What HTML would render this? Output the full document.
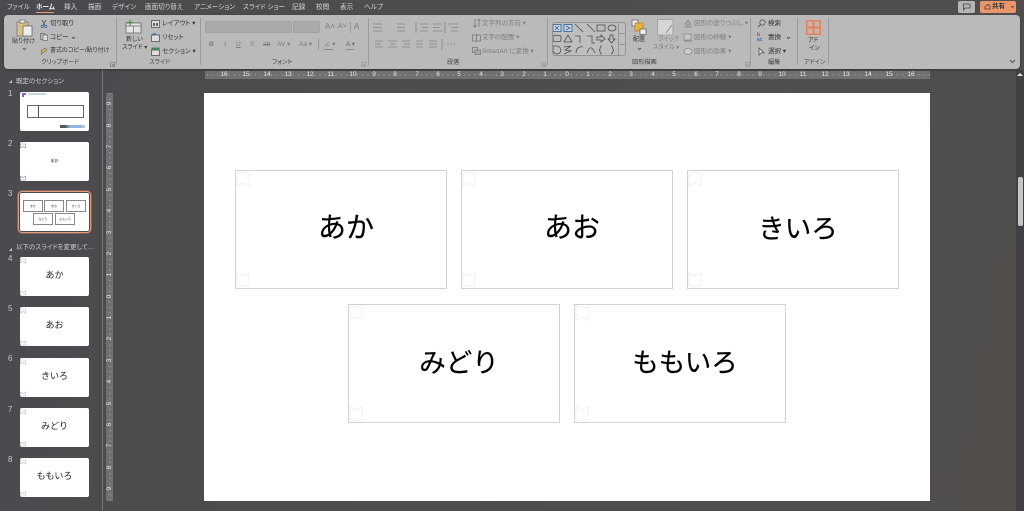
<!DOCTYPE html>
<html lang="ja"><head><meta charset="utf-8"><title>PowerPoint</title>
<style>
html,body{margin:0;padding:0;width:1024px;height:511px;overflow:hidden;background:#4d4b4e;font-family:"Liberation Sans","Noto Sans CJK JP",sans-serif;font-feature-settings:"palt"}
.a{position:absolute;white-space:nowrap}
#app{position:relative;width:1024px;height:511px;overflow:hidden;background:linear-gradient(100deg,#4b4a4e,#504e4e 80%,#514e4c);filter:blur(.25px)}
.m{top:3px;font-size:6.6px;line-height:9px;color:#d6d6d6}
.t{font-size:6.5px;line-height:9px;color:#333}
.d{font-size:6.5px;line-height:9px;color:#7e7e7e}
.l{font-size:6.2px;line-height:9px;color:#444;top:58px}
.sep{position:absolute;top:18px;height:47px;width:1px;background:#9b9b9b}
.card{position:absolute;width:210px;height:117px;border:1px solid #d2d2d2;background:#fff;font-family:"Noto Sans CJK JP",sans-serif;font-size:26.5px;line-height:111px;text-align:center;text-indent:10px;color:#000;-webkit-text-stroke:.2px #000;font-feature-settings:normal}
.card svg{position:absolute;left:0;width:14px;height:16px}
.th{position:absolute;left:20px;width:69px;height:39px;background:#fff;border-radius:2px;text-align:center;font-size:9px;line-height:35px;color:#222;font-family:"Noto Sans CJK JP",sans-serif;font-feature-settings:normal}
.th svg{position:absolute;left:0;width:6px;height:6px}
.n{position:absolute;left:8px;font-size:8px;line-height:10px;color:#c9c9c9}
.mini{position:absolute;height:10px;border:1px solid #888;background:#fff;font-size:3px;line-height:10px;text-align:center;color:#444;text-indent:0}
.rh{position:absolute;top:71px;font-size:6.5px;line-height:8px;color:#ececec;transform:translateX(-50%);background:#707070}
.rv{position:absolute;left:106px;width:7px;text-align:center;font-size:6.5px;line-height:7px;color:#ececec;transform:rotate(-90deg);background:#707070}
.g{position:absolute;height:10px;background:#aaa;border:1px solid #a2a2a2;border-radius:2px}
</style></head><body><div id="app">

<div class="a m" style="left:7px">ファイル</div>
<div class="a m" style="left:36px;color:#f1f1f1;font-weight:bold">ホーム</div>
<div class="a" style="left:36px;top:12px;width:18px;height:1px;background:#e59a7a"></div>
<div class="a m" style="left:64px">挿入</div>
<div class="a m" style="left:88px">描画</div>
<div class="a m" style="left:112px">デザイン</div>
<div class="a m" style="left:145px">画面切り替え</div>
<div class="a m" style="left:194px">アニメーション</div>
<div class="a m" style="left:243px">スライド ショー</div>
<div class="a m" style="left:292px">記録</div>
<div class="a m" style="left:316px">校閲</div>
<div class="a m" style="left:340px">表示</div>
<div class="a m" style="left:364px">ヘルプ</div>

<div class="a" style="left:958px;top:1px;width:17px;height:12px;background:#b5b5b5;border-radius:2px"></div>
<svg class="a" style="left:962px;top:3px" width="9" height="8" viewBox="0 0 9 8"><path d="M1 1H8V5H3L1.500 7V1" fill="none" stroke="#444" stroke-width=".8"/></svg>
<div class="a" style="left:980px;top:1px;width:36px;height:12px;background:#e8966a;border-radius:2px;font-size:6.5px;line-height:12px;color:#333;text-indent:12px;font-weight:bold">共有</div>
<svg class="a" style="left:984px;top:3px" width="7" height="7" viewBox="0 0 7 7"><path d="M1 3V6H6V3M2 3L4 1.500L6 2.500" fill="none" stroke="#444" stroke-width=".8"/></svg>
<svg class="a" style="left:1010px;top:5px" width="5" height="4" viewBox="0 0 5 4"><path d="M1 1L2.500 2.500L4 1" fill="none" stroke="#444" stroke-width=".8"/></svg>

<div class="a" style="left:4px;top:15px;width:1016px;height:54px;background:#bababa;border-radius:4px;box-shadow:0 1px 2px #333"></div>
<div class="sep" style="left:116px"></div><div class="sep" style="left:200px"></div><div class="sep" style="left:368px"></div><div class="sep" style="left:547px"></div><div class="sep" style="left:750px"></div><div class="sep" style="left:797px"></div><div class="sep" style="left:828px"></div>

<!-- clipboard -->
<svg class="a" style="left:16px;top:19px" width="17" height="18" viewBox="0 0 17 18"><rect x="1" y="3" width="11" height="14" fill="#d9c089" stroke="#777" stroke-width=".8"/><rect x="4" y="1" width="5" height="3" fill="#eee" stroke="#666" stroke-width=".7"/><rect x="7" y="7" width="9" height="10" fill="#eee" stroke="#666" stroke-width=".8"/></svg>
<div class="a t" style="left:12px;top:38px;font-size:6px">貼り付け</div>
<svg class="a" style="left:22px;top:47px" width="5" height="4" viewBox="0 0 5 4"><path d="M1 1L2.500 2.500L4 1" fill="none" stroke="#444" stroke-width=".8"/></svg>
<svg class="a" style="left:40px;top:19px" width="8" height="9" viewBox="0 0 8 9"><path d="M2 1L5 6M6 1L3 6" stroke="#555" fill="none" stroke-width=".8"/><circle cx="2.300" cy="7.300" r="1.200" fill="none" stroke="#3a6ea5" stroke-width=".8"/><circle cx="5.700" cy="7.300" r="1.200" fill="none" stroke="#3a6ea5" stroke-width=".8"/></svg>
<div class="a t" style="left:50px;top:19px">切り取り</div>
<svg class="a" style="left:40px;top:33px" width="8" height="8" viewBox="0 0 8 8"><rect x=".5" y=".5" width="4.500" height="6" fill="none" stroke="#666" stroke-width=".7"/><rect x="3" y="2" width="4.500" height="5.500" fill="#ddd" stroke="#666" stroke-width=".7"/></svg>
<div class="a t" style="left:50px;top:33px">コピー</div>
<svg class="a" style="left:71px;top:36px" width="5" height="4" viewBox="0 0 5 4"><path d="M1 1L2.500 2.500L4 1" fill="none" stroke="#444" stroke-width=".8"/></svg>
<svg class="a" style="left:40px;top:47px" width="8" height="8" viewBox="0 0 8 8"><path d="M1 4L5 1L7 3L3 6Z" fill="#d8b560" stroke="#666" stroke-width=".6"/><path d="M2 6L1 7.500" stroke="#555" stroke-width=".8"/></svg>
<div class="a t" style="left:50px;top:47px;font-size:6px">書式のコピー/貼り付け</div>
<div class="a l" style="left:41px">クリップボード</div>
<svg class="a" style="left:110px;top:62px" width="5" height="5" viewBox="0 0 5 5"><path d="M.5 .5H4.500V4.500H.5ZM2 2L4 4" fill="none" stroke="#666" stroke-width=".6"/></svg>

<!-- slides -->
<svg class="a" style="left:125px;top:19px" width="17" height="15" viewBox="0 0 17 15"><rect x="1" y="4" width="15" height="10" fill="#e4e4e4" stroke="#666" stroke-width=".8"/><path d="M1 7H16M8.500 7V14" stroke="#666" stroke-width=".7"/><path d="M5 .5V7M2 3.500H8" stroke="#3d8a3d" stroke-width="1"/></svg>
<div class="a t" style="left:126px;top:36px;font-size:6px">新しい</div>
<div class="a t" style="left:122px;top:44px;font-size:6px">スライド ▾</div>
<svg class="a" style="left:151px;top:20px" width="9" height="8" viewBox="0 0 9 8"><rect x=".5" y=".5" width="8" height="7" fill="#ddd" stroke="#555" stroke-width=".8"/><rect x="2" y="3" width="2" height="3" fill="#666"/><rect x="5" y="3" width="2" height="3" fill="#666"/></svg>
<div class="a t" style="left:162px;top:19px">レイアウト ▾</div>
<svg class="a" style="left:151px;top:33px" width="9" height="9" viewBox="0 0 9 9"><rect x=".5" y="2" width="8" height="6.500" fill="#ddd" stroke="#555" stroke-width=".8"/><path d="M1 2.500A3 3 0 0 1 5 1" fill="none" stroke="#2f6fb5" stroke-width="1.200"/></svg>
<div class="a t" style="left:162px;top:33px">リセット</div>
<svg class="a" style="left:151px;top:47px" width="9" height="9" viewBox="0 0 9 9"><rect x=".5" y=".5" width="8" height="2" fill="#3d8a5d"/><rect x=".5" y="3" width="8" height="5.500" fill="#ddd" stroke="#555" stroke-width=".8"/></svg>
<div class="a t" style="left:162px;top:47px">セクション ▾</div>
<div class="a l" style="left:149px">スライド</div>

<!-- font -->
<div class="g" style="left:205px;top:21px;width:85px"></div>
<div class="g" style="left:293px;top:21px;width:25px"></div>
<div class="a d" style="left:325px;top:22px;font-size:8px">A˄</div>
<div class="a d" style="left:338px;top:22px;font-size:7px">A˅</div>
<div class="a" style="left:350px;top:22px;width:1px;height:11px;background:#999"></div>
<div class="a d" style="left:354px;top:22px;font-size:8px">A</div>
<div class="a d" style="left:209px;top:40px;font-weight:bold">B</div>
<div class="a d" style="left:224px;top:40px;font-style:italic;font-family:'Liberation Serif'">I</div>
<div class="a d" style="left:236px;top:40px;text-decoration:underline">U</div>
<div class="a d" style="left:250px;top:40px">S</div>
<div class="a d" style="left:263px;top:40px;text-decoration:line-through">ab</div>
<div class="a d" style="left:277px;top:40px">AV ▾</div>
<div class="a d" style="left:299px;top:40px">Aa ▾</div>
<div class="a" style="left:318px;top:38px;width:1px;height:12px;background:#999"></div>
<div class="a d" style="left:324px;top:40px">∠ ▾</div>
<div class="a" style="left:324px;top:49px;width:9px;height:1px;background:#888"></div>
<div class="a d" style="left:346px;top:40px;color:#6a6a6a">A ▾</div>
<div class="a" style="left:346px;top:49px;width:8px;height:1px;background:#888"></div>
<div class="a l" style="left:272px">フォント</div>
<svg class="a" style="left:361px;top:62px" width="5" height="5" viewBox="0 0 5 5"><path d="M.5 .5H4.500V4.500H.5ZM2 2L4 4" fill="none" stroke="#888" stroke-width=".6"/></svg>

<!-- paragraph -->
<svg class="a" style="left:373px;top:22px" width="95" height="30" viewBox="0 0 95 30" fill="none" stroke="#858585" stroke-width=".8">
<path d="M0 2H9M0 5.500H9M0 9H9M24 2H32M24 5.500H32M24 9H32M47 2H55M49 5.500H55M47 9H55M60 2H69M60 5.500H67M60 9H69M75 2H85M78 5.500H85M78 9H85"/>
<path d="M2 19H10M2 22H8M2 25H10M15 19H24M17 22H22M15 25H24M29 19H37M31 22H37M29 25H37M43 19H50M43 22H50M43 25H50M56 19H64M56 22H64M56 25H64"/>
<path d="M43 0V11M72 0V11M69 17V28"/><path d="M74 22H82" stroke-dasharray="2 1"/></svg>
<svg class="a" style="left:473px;top:19px" width="9" height="9" viewBox="0 0 9 9"><path d="M2 0V8M0.500 6.500L2 8L3.500 6.500M6 8V0M4.500 1.500L6 0L7.500 1.500" fill="none" stroke="#777" stroke-width=".8"/></svg>
<div class="a d" style="left:482px;top:19px">文字列の方向 ▾</div>
<svg class="a" style="left:472px;top:34px" width="9" height="8" viewBox="0 0 9 8"><path d="M.5 1H8.500V7H.5ZM4.500 0V8" fill="none" stroke="#777" stroke-width=".8"/></svg>
<div class="a d" style="left:482px;top:33px">文字の配置 ▾</div>
<svg class="a" style="left:472px;top:47px" width="9" height="8" viewBox="0 0 9 8"><rect x=".5" y=".5" width="5" height="5" fill="none" stroke="#777" stroke-width=".8"/><rect x="3" y="3" width="5.500" height="4.500" fill="#aaa" stroke="#777" stroke-width=".7"/></svg>
<div class="a d" style="left:482px;top:47px">SmartArt に変換 ▾</div>
<div class="a l" style="left:447px">段落</div>
<svg class="a" style="left:541px;top:62px" width="5" height="5" viewBox="0 0 5 5"><path d="M.5 .5H4.500V4.500H.5ZM2 2L4 4" fill="none" stroke="#888" stroke-width=".6"/></svg>

<!-- drawing -->
<div class="a" style="left:552px;top:22px;width:72px;height:32px;border:1px solid #949494;border-radius:3px;background:#bebebe"></div>
<svg class="a" style="left:553px;top:23px" width="65" height="33" viewBox="0 0 65 33" fill="none" stroke="#4e4e4e" stroke-width=".8">
<rect x="0" y="1.500" width="8" height="7" fill="#c9d6e6" stroke="#2d5f95"/><path d="M2 3L6 7M6 3L2 7" stroke="#2d5f95"/><rect x="11" y="1.500" width="8" height="7" fill="#c9d6e6" stroke="#2d5f95"/><path d="M13 3L17 5L13 7" stroke="#2d5f95"/>
<path d="M22 1L30 9M34 1L42 9"/><rect x="44" y="2" width="8" height="6"/><ellipse cx="59" cy="5" rx="4" ry="3"/>
<rect x="0" y="12.500" width="8" height="6" rx="1.500"/><path d="M11 19L15 12L19 19Z"/><path d="M22 13H27V20M34 13H39V20H42"/><path d="M44 14H48V12L52 16L48 19V17H44Z"/><path d="M57 12H60V16H62L58.500 20L55 16H57Z"/>
<path d="M0 23H4A4 4 0 1 1 0 28Z"/><path d="M11 24L18 23L12 27L18 28L11 31"/><path d="M23 30C23 25 27 23 30 24M34 30C37 22 39 24 42 30"/><path d="M49 23C46 23 48 27 46 27C48 27 46 31 49 31M58 23C61 23 59 27 61 27C59 27 61 31 58 31"/></svg>
<div class="a" style="left:618px;top:22px;width:1px;height:33px;background:#949494"></div>
<div class="a" style="left:618px;top:33px;width:7px;height:1px;background:#949494"></div>
<div class="a" style="left:618px;top:44px;width:7px;height:1px;background:#949494"></div>
<svg class="a" style="left:631px;top:19px" width="16" height="16" viewBox="0 0 16 16"><rect x="1" y="1" width="6" height="6" fill="#eee" stroke="#666" stroke-width=".8"/><rect x="4" y="4" width="8" height="8" fill="#e8b33c" stroke="#a87e1d" stroke-width=".6"/><rect x="9" y="10" width="6" height="5.500" fill="#eee" stroke="#666" stroke-width=".8"/></svg>
<div class="a t" style="left:633px;top:36px;font-size:6px">配置</div>
<svg class="a" style="left:637px;top:47px" width="5" height="4" viewBox="0 0 5 4"><path d="M1 1L2.500 2.500L4 1" fill="none" stroke="#444" stroke-width=".8"/></svg>
<svg class="a" style="left:657px;top:19px" width="17" height="17" viewBox="0 0 17 17"><rect x=".5" y=".5" width="15.500" height="15.500" rx="1" fill="#d6d6d6" stroke="#a3a3a3"/><path d="M9 14L15 6" stroke="#8e8e8e"/></svg>
<div class="a d" style="left:658px;top:36px;font-size:6px">クイック</div>
<div class="a d" style="left:653px;top:44px;font-size:6px">スタイル ▾</div>
<div class="a l" style="left:632px">図形描画</div>
<svg class="a" style="left:683px;top:19px" width="10" height="9" viewBox="0 0 10 9"><path d="M2 5L5 1L8 5L5 7Z" fill="#aaa" stroke="#888" stroke-width=".7"/><path d="M1 8H9" stroke="#888"/></svg>
<div class="a d" style="left:694px;top:19px">図形の塗りつぶし ▾</div>
<svg class="a" style="left:683px;top:33px" width="10" height="9" viewBox="0 0 10 9"><rect x="1" y="1" width="7" height="6" fill="#c7c7c7" stroke="#8b8b8b" stroke-width=".8"/><path d="M1 8H9" stroke="#888"/></svg>
<div class="a d" style="left:694px;top:33px">図形の枠線 ▾</div>
<svg class="a" style="left:683px;top:47px" width="10" height="9" viewBox="0 0 10 9"><ellipse cx="5" cy="4.500" rx="4" ry="3" fill="#ccc" stroke="#8b8b8b" stroke-width=".8"/></svg>
<div class="a d" style="left:694px;top:47px">図形の効果 ▾</div>
<svg class="a" style="left:745px;top:62px" width="5" height="5" viewBox="0 0 5 5"><path d="M.5 .5H4.500V4.500H.5ZM2 2L4 4" fill="none" stroke="#888" stroke-width=".6"/></svg>

<!-- edit -->
<svg class="a" style="left:757px;top:19px" width="9" height="9" viewBox="0 0 9 9"><circle cx="5.500" cy="3.500" r="2.700" fill="none" stroke="#555" stroke-width=".8"/><path d="M3.500 5.500L1 8" stroke="#555"/></svg>
<div class="a t" style="left:768px;top:19px">検索</div>
<div class="a" style="left:757px;top:33px;width:9px;font-size:5px;line-height:5px;font-weight:bold;color:#3a6fb0"><span style="color:#a0409a">b</span><br>ac</div>
<div class="a t" style="left:768px;top:33px">置換</div>
<svg class="a" style="left:786px;top:36px" width="5" height="4" viewBox="0 0 5 4"><path d="M1 1L2.500 2.500L4 1" fill="none" stroke="#444" stroke-width=".8"/></svg>
<svg class="a" style="left:758px;top:47px" width="8" height="9" viewBox="0 0 8 9"><path d="M1 1V8L3 6L6 6Z" fill="#ddd" stroke="#555" stroke-width=".8"/></svg>
<div class="a t" style="left:768px;top:47px">選択 ▾</div>
<div class="a l" style="left:768px">編集</div>

<!-- addin -->
<svg class="a" style="left:805px;top:19px" width="17" height="17" viewBox="0 0 17 17" fill="none"><rect x="1" y="1" width="15" height="15" fill="#e2825e"/><rect x="2.500" y="2.500" width="5" height="5" fill="#c9b4aa"/><rect x="9.500" y="2.500" width="5" height="5" fill="#c9b4aa"/><rect x="2.500" y="9.500" width="5" height="5" fill="#c9b4aa"/><rect x="9.500" y="9.500" width="5" height="5" fill="#c9b4aa"/></svg>
<div class="a t" style="left:808px;top:37px;font-size:6px">アド</div>
<div class="a t" style="left:809px;top:45px;font-size:6px">イン</div>
<div class="a l" style="left:804px">アドイン</div>
<svg class="a" style="left:1009px;top:59px" width="7" height="5" viewBox="0 0 7 5"><path d="M1 1L3.500 3.500L6 1" fill="none" stroke="#555"/></svg>

<!-- sidebar -->
<div class="a" style="left:102px;top:70px;width:1px;height:441px;background:#767676"></div>
<div class="a" style="left:9px;top:80px;border-left:3px solid transparent;border-bottom:3px solid #ccc;"></div>
<div class="a" style="left:16px;top:77px;font-size:6.500px;line-height:9px;color:#cfcfcf">既定のセクション</div>

<div class="n" style="top:89px">1</div>
<div class="th" style="top:92px"><svg style="top:0;left:1px;width:6px;height:6px" viewBox="0 0 6 6"><rect x="1" y="1" width="2" height="4" fill="#c14fb0"/><rect x="3" y="1" width="2" height="2" fill="#4a7fd0"/></svg>
<div class="a" style="left:8px;top:1px;width:18px;height:2px;background:#c9d6e6"></div>
<div class="a" style="left:7px;top:13px;width:55px;height:11px;border:1px solid #666;background:#fff;font-size:2.500px;line-height:11px"></div>
<div class="a" style="left:18px;top:13px;width:1px;height:13px;background:#555"></div>
<div class="a" style="left:40px;top:33px;width:25px;height:3px;background:linear-gradient(90deg,#555 20%,#8fb7e0 40%,#8fb7e0 80%,#ccc)"></div></div>

<div class="n" style="top:139px">2</div>
<div class="th" style="top:142px;font-size:4px;line-height:38px">あお<svg style="top:1px" viewBox="0 0 6 6"><path d="M.5 1H5.500V5L3 3.500L.5 5Z" fill="none" stroke="#888" stroke-width=".6"/></svg><svg style="bottom:0" viewBox="0 0 6 6"><path d="M.5 1L3 2.500L5.500 1V5H.5Z" fill="none" stroke="#888" stroke-width=".6"/></svg></div>

<div class="a" style="left:18px;top:191px;width:71px;height:40px;border:1px solid #e59a7a;border-radius:4px;box-shadow:0 0 0 .5px #b97d67"></div>
<div class="n" style="top:189px">3</div>
<div class="th" style="top:193px;height:38px">
<div class="mini" style="left:3px;top:7px;width:18px">あか</div>
<div class="mini" style="left:24px;top:7px;width:18px">あお</div>
<div class="mini" style="left:46px;top:7px;width:18px">きいろ</div>
<div class="mini" style="left:13px;top:20px;width:18px">みどり</div>
<div class="mini" style="left:35px;top:20px;width:18px">ももいろ</div>
</div>

<div class="a" style="left:9px;top:248px;border-left:3px solid transparent;border-bottom:3px solid #ccc;"></div>
<div class="a" style="left:16px;top:243px;font-size:6.500px;line-height:9px;color:#cfcfcf">以下のスライドを変更して…</div>

<div class="n" style="top:254px">4</div>
<div class="th" style="top:257px">あか<svg style="top:1px" viewBox="0 0 6 6"><path d="M.5 1H5.500V5L3 3.500L.5 5Z" fill="none" stroke="#bbb" stroke-width=".6"/></svg><svg style="bottom:0" viewBox="0 0 6 6"><path d="M.5 1L3 2.500L5.500 1V5H.5Z" fill="none" stroke="#bbb" stroke-width=".6"/></svg></div>
<div class="n" style="top:304px">5</div>
<div class="th" style="top:307px">あお<svg style="top:1px" viewBox="0 0 6 6"><path d="M.5 1H5.500V5L3 3.500L.5 5Z" fill="none" stroke="#bbb" stroke-width=".6"/></svg><svg style="bottom:0" viewBox="0 0 6 6"><path d="M.5 1L3 2.500L5.500 1V5H.5Z" fill="none" stroke="#bbb" stroke-width=".6"/></svg></div>
<div class="n" style="top:354px">6</div>
<div class="th" style="top:358px">きいろ<svg style="top:1px" viewBox="0 0 6 6"><path d="M.5 1H5.500V5L3 3.500L.5 5Z" fill="none" stroke="#bbb" stroke-width=".6"/></svg><svg style="bottom:0" viewBox="0 0 6 6"><path d="M.5 1L3 2.500L5.500 1V5H.5Z" fill="none" stroke="#bbb" stroke-width=".6"/></svg></div>
<div class="n" style="top:405px">7</div>
<div class="th" style="top:408px">みどり<svg style="top:1px" viewBox="0 0 6 6"><path d="M.5 1H5.500V5L3 3.500L.5 5Z" fill="none" stroke="#bbb" stroke-width=".6"/></svg><svg style="bottom:0" viewBox="0 0 6 6"><path d="M.5 1L3 2.500L5.500 1V5H.5Z" fill="none" stroke="#bbb" stroke-width=".6"/></svg></div>
<div class="n" style="top:455px">8</div>
<div class="th" style="top:458px">ももいろ<svg style="top:1px" viewBox="0 0 6 6"><path d="M.5 1H5.500V5L3 3.500L.5 5Z" fill="none" stroke="#bbb" stroke-width=".6"/></svg><svg style="bottom:0" viewBox="0 0 6 6"><path d="M.5 1L3 2.500L5.500 1V5H.5Z" fill="none" stroke="#bbb" stroke-width=".6"/></svg></div>

<!-- rulers -->
<div class="a" style="left:205px;top:71px;width:725px;height:8px;background:repeating-linear-gradient(90deg,#909090 0,#909090 1px,transparent 1px,transparent 5.350px) 2px 3px/100% 2px no-repeat,#707070"></div>
<div class="a" style="left:106px;top:93px;width:7px;height:408px;background:repeating-linear-gradient(180deg,#909090 0,#909090 1px,transparent 1px,transparent 5.350px) 3px 0/2px 100% no-repeat,#707070"></div>
<div class="rh" style="left:224px">16</div><div class="rh" style="left:246px">15</div><div class="rh" style="left:267px">14</div><div class="rh" style="left:288px">13</div><div class="rh" style="left:310px">12</div><div class="rh" style="left:331px">11</div><div class="rh" style="left:353px">10</div><div class="rh" style="left:374px">9</div><div class="rh" style="left:395px">8</div><div class="rh" style="left:417px">7</div><div class="rh" style="left:438px">6</div><div class="rh" style="left:459px">5</div><div class="rh" style="left:481px">4</div><div class="rh" style="left:502px">3</div><div class="rh" style="left:524px">2</div><div class="rh" style="left:545px">1</div><div class="rh" style="left:567px">0</div><div class="rh" style="left:588px">1</div><div class="rh" style="left:610px">2</div><div class="rh" style="left:631px">3</div><div class="rh" style="left:653px">4</div><div class="rh" style="left:674px">5</div><div class="rh" style="left:696px">6</div><div class="rh" style="left:717px">7</div><div class="rh" style="left:739px">8</div><div class="rh" style="left:760px">9</div><div class="rh" style="left:782px">10</div><div class="rh" style="left:803px">11</div><div class="rh" style="left:825px">12</div><div class="rh" style="left:846px">13</div><div class="rh" style="left:868px">14</div><div class="rh" style="left:889px">15</div><div class="rh" style="left:911px">16</div>
<div class="rv" style="top:100px">9</div><div class="rv" style="top:122px">8</div><div class="rv" style="top:143px">7</div><div class="rv" style="top:164px">6</div><div class="rv" style="top:186px">5</div><div class="rv" style="top:207px">4</div><div class="rv" style="top:229px">3</div><div class="rv" style="top:250px">2</div><div class="rv" style="top:271px">1</div><div class="rv" style="top:293px">0</div><div class="rv" style="top:314px">1</div><div class="rv" style="top:335px">2</div><div class="rv" style="top:357px">3</div><div class="rv" style="top:378px">4</div><div class="rv" style="top:400px">5</div><div class="rv" style="top:421px">6</div><div class="rv" style="top:442px">7</div><div class="rv" style="top:464px">8</div><div class="rv" style="top:485px">9</div>

<!-- slide -->
<div class="a" style="left:204px;top:93px;width:726px;height:408px;background:#fff"></div>
<div class="card" style="left:235px;top:170px;font-size:28px">あか<svg style="top:0" viewBox="0 0 14 16"><path d="M1 3L7 1L13 3V15L7 12L1 15Z" fill="none" stroke="#f0f0f0"/></svg><svg style="bottom:0" viewBox="0 0 14 16"><path d="M1 1L7 4L13 1V13L7 15L1 13Z" fill="none" stroke="#f0f0f0"/></svg></div>
<div class="card" style="left:461px;top:170px;font-size:28px">あお<svg style="top:0" viewBox="0 0 14 16"><path d="M1 3L7 1L13 3V15L7 12L1 15Z" fill="none" stroke="#f0f0f0"/></svg><svg style="bottom:0" viewBox="0 0 14 16"><path d="M1 1L7 4L13 1V13L7 15L1 13Z" fill="none" stroke="#f0f0f0"/></svg></div>
<div class="card" style="left:687px;top:170px">きいろ<svg style="top:0" viewBox="0 0 14 16"><path d="M1 3L7 1L13 3V15L7 12L1 15Z" fill="none" stroke="#f0f0f0"/></svg><svg style="bottom:0" viewBox="0 0 14 16"><path d="M1 1L7 4L13 1V13L7 15L1 13Z" fill="none" stroke="#f0f0f0"/></svg></div>
<div class="card" style="left:348px;top:304px">みどり<svg style="top:0" viewBox="0 0 14 16"><path d="M1 3L7 1L13 3V15L7 12L1 15Z" fill="none" stroke="#f0f0f0"/></svg><svg style="bottom:0" viewBox="0 0 14 16"><path d="M1 1L7 4L13 1V13L7 15L1 13Z" fill="none" stroke="#f0f0f0"/></svg></div>
<div class="card" style="left:574px;top:304px">ももいろ<svg style="top:0" viewBox="0 0 14 16"><path d="M1 3L7 1L13 3V15L7 12L1 15Z" fill="none" stroke="#f0f0f0"/></svg><svg style="bottom:0" viewBox="0 0 14 16"><path d="M1 1L7 4L13 1V13L7 15L1 13Z" fill="none" stroke="#f0f0f0"/></svg></div>

<!-- scrollbar -->
<div class="a" style="left:1016px;top:70px;width:8px;height:441px;background:#414042"></div>
<div class="a" style="left:1017px;top:73px;border-left:3px solid transparent;border-right:3px solid transparent;border-bottom:3px solid #e5e5e5"></div>
<div class="a" style="left:1018px;top:177px;width:5px;height:49px;background:#c6c6c6;border-radius:2px"></div>
</div></body></html>
